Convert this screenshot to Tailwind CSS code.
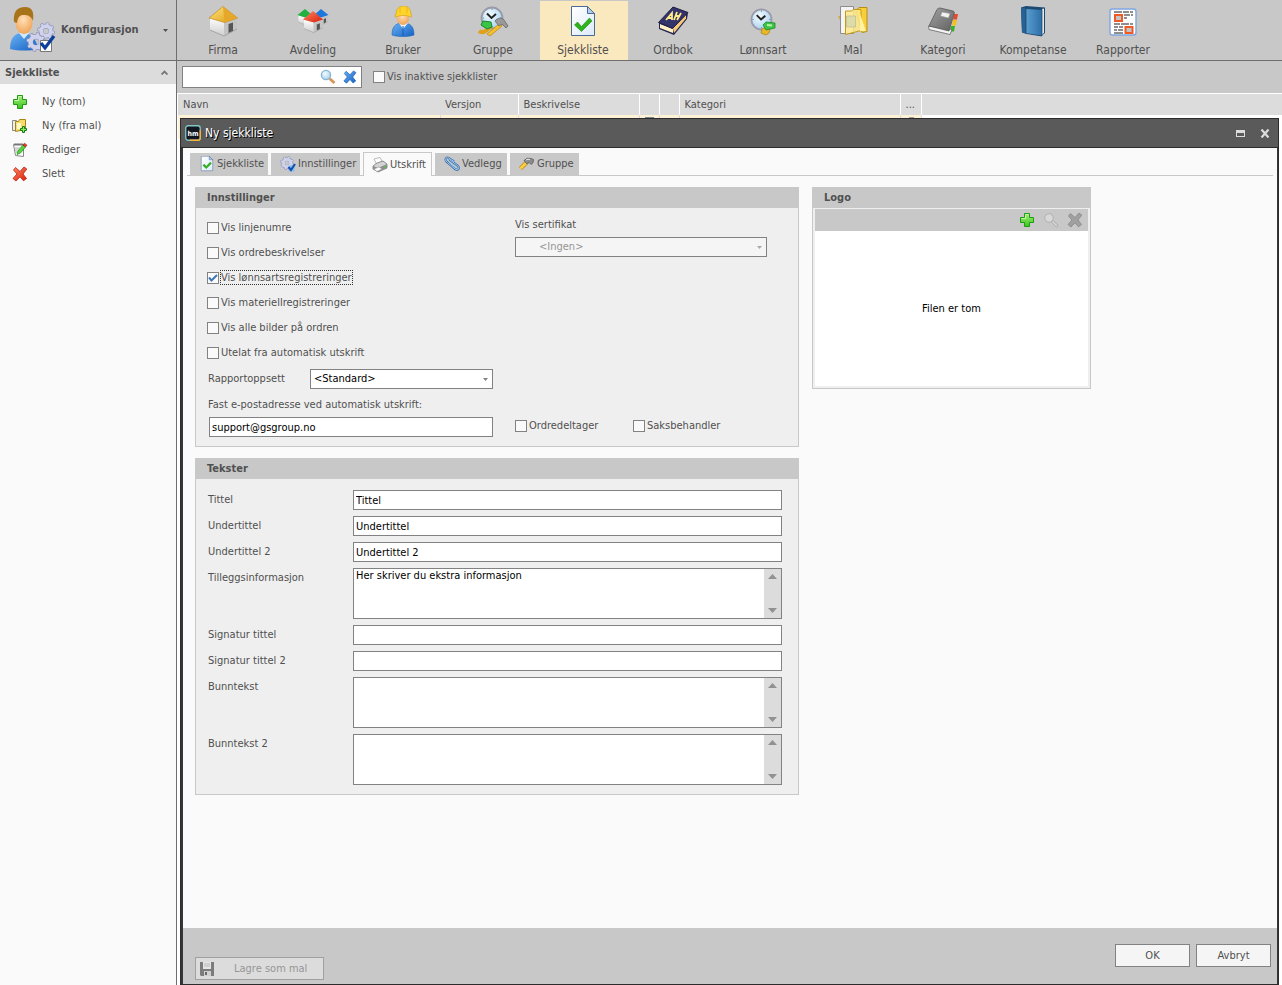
<!DOCTYPE html>
<html lang="no">
<head>
    <meta charset="UTF-8">
    <meta name="viewport" content="width=device-width, initial-scale=1.0">
    <title>Konfigurasjon - Sjekkliste</title>
    <script src="https://cdn.jsdelivr.net/npm/@tailwindcss/browser@4"></script>
</head>
<body class="flex h-screen overflow-hidden bg-[#fafafa] font-['DejaVu_Sans_Condensed','DejaVu_Sans',sans-serif] text-[11px] leading-4 text-[#505050]">

    <!-- Shared gradients and symbols -->
    <svg class="absolute size-0" aria-hidden="true">
        <defs>
            <linearGradient id="gold" x1="0" y1="0" x2="1" y2="1"><stop offset="0" stop-color="#ffe680"/><stop offset="1" stop-color="#dd9a10"/></linearGradient>
            <linearGradient id="wall" x1="0" y1="0" x2="0" y2="1"><stop offset="0" stop-color="#fff"/><stop offset="1" stop-color="#cfcfcf"/></linearGradient>
            <linearGradient id="blue" x1="0" y1="0" x2="1" y2="1"><stop offset="0" stop-color="#6ab4f5"/><stop offset="1" stop-color="#155fc4"/></linearGradient>
            <linearGradient id="green" x1="0" y1="0" x2="0" y2="1"><stop offset="0" stop-color="#a4f07c"/><stop offset="1" stop-color="#3cc41a"/></linearGradient>
            <linearGradient id="red" x1="0" y1="0" x2="1" y2="1"><stop offset="0" stop-color="#ff8a66"/><stop offset="1" stop-color="#d81c08"/></linearGradient>
            <linearGradient id="steel" x1="0" y1="0" x2="1" y2="1"><stop offset="0" stop-color="#a2a2a2"/><stop offset="1" stop-color="#606060"/></linearGradient>
            <linearGradient id="cover" x1="0" y1="0" x2="1" y2="0"><stop offset="0" stop-color="#5a9fd0"/><stop offset="1" stop-color="#2c6ea6"/></linearGradient>
            <linearGradient id="paper" x1="0" y1="0" x2="1" y2="1"><stop offset="0" stop-color="#fff"/><stop offset="1" stop-color="#dceafa"/></linearGradient>
            <radialGradient id="skin" cx=".45" cy=".35" r=".7"><stop offset="0" stop-color="#ffe0b8"/><stop offset="1" stop-color="#f0a050"/></radialGradient>
            <radialGradient id="glass" cx=".4" cy=".35" r=".7"><stop offset="0" stop-color="#f4fcff"/><stop offset="1" stop-color="#a4d0ee"/></radialGradient>
        </defs>
        <symbol id="house" viewBox="0 0 32 32">
            <path d="M3 11 17 15v15L3 24z" fill="url(#wall)"/>
            <path d="M17 15 30 11v12L17 30z" fill="#c4c4c4"/>
            <path d="M21.500 18 26 16.500v8.500l-4.500 2z" fill="#555"/>
            <path d="M3 24 17 30 30 23" fill="none" stroke="#999" stroke-width=".8"/>
        </symbol>
        <symbol id="clock" viewBox="0 0 24 24">
            <circle cx="12" cy="12" r="10.500" fill="url(#glass)" stroke="#9a9aa8" stroke-width="1.800"/>
            <path d="M7 7.500 11.500 12 16 8" fill="none" stroke="#222" stroke-width="2"/>
            <path d="M12 2.500v1.500M12 20v1.500M2.500 12H4M20 12h1.500" stroke="#678" stroke-width=".8"/>
        </symbol>
        <symbol id="plus" viewBox="0 0 16 16">
            <path d="M5.500 1.500h5v4h4v5h-4v4h-5v-4h-4v-5h4z" fill="url(#green)" stroke="#1f9a14"/>
            <path d="M6.500 2.500h3M2.500 6.500h4v-3" fill="none" stroke="#cbf9b0"/>
        </symbol>
        <symbol id="cross" viewBox="0 0 16 16">
            <path d="M3.500 1.500 8 5.500 12 1 14.800 3 11 8l3.500 4.500-3 2.300L8 10.800 4 15 1 12.500 5 8 1.500 4z"/>
        </symbol>
        <symbol id="gear" viewBox="0 0 20 20">
            <circle cx="10" cy="10" r="8" fill="none" stroke="#8a8fb8" stroke-width="3.600" stroke-dasharray="3.140 3.140"/>
            <circle cx="10" cy="10" r="5.600" fill="none" stroke="#8a8fb8" stroke-width="5.500"/>
            <circle cx="10" cy="10" r="8" fill="none" stroke="#d3d6ec" stroke-width="2.200" stroke-dasharray="2.300 3.980" stroke-dashoffset="-.4"/>
            <circle cx="10" cy="10" r="5.400" fill="none" stroke="#cfd2ea" stroke-width="4.400"/>
        </symbol>
        <symbol id="checkpage" viewBox="0 0 32 32">
            <path d="M4.500 .5h16l7 7v22h-23z" fill="url(#paper)" stroke="#4a6a98"/>
            <path d="M20.500 .5v7h7z" fill="#b4cdea" stroke="#4a6a98"/>
            <path d="M7.500 19 10.500 16l4 4.500L22.500 12l2.500 3-10.500 10.500z" fill="#2fb31c" stroke="#1d8a10" stroke-width=".6"/>
        </symbol>
        <symbol id="folder" viewBox="0 0 32 32">
            <path d="M1 10l5 1v5H4z" fill="#d9a520"/>
            <path d="M3.500 .5h13v27h-13z" fill="#f4f4f4" stroke="#8d8d8d"/>
            <path d="M19 4.500l3-3h8v24l-5 1z" fill="#f6cf3a" stroke="#b98d12"/>
            <path d="M8.500 5h6l2-1.500H24v21L8.500 28.500z" fill="#ffe98a" fill-opacity=".85" stroke="#c59a16"/>
            <path d="M9.500 10h9v11h-9z" fill="#dcdca8" stroke="#b4b48a" stroke-width=".6"/>
            <path d="M23 25V8l6 17z" fill="#fff2a0"/>
        </symbol>
    </svg>

    <!-- Sidebar -->
    <aside class="flex w-[177px] shrink-0 flex-col border-r border-[#6e6e6e]">
        <button class="flex h-[61px] items-center border-b border-[#6e6e6e] bg-[#c8c8c8] pr-2 pl-2 text-left font-bold">
            <svg class="size-12 shrink-0" viewBox="0 0 48 48" aria-hidden="true">
                <path d="M2 43c0-10 4-16 12-16s14 4 16 16c-9 2-19 2-28 0z" fill="url(#blue)"/>
                <path d="M11 27l5 6 5-6z" fill="#d5e8fa"/>
                <ellipse cx="16" cy="17" rx="8.500" ry="11" fill="url(#skin)"/>
                <path d="M6 16C5 6 9 1 17 1s9 6 8 14c-2-5-5-6-9-6s-6 1-7 8z" fill="#a8741a"/>
                <use href="#gear" x="29" y="16" width="18" height="18"/>
                <use href="#gear" x="18" y="26" width="20" height="20"/>
                <path d="M32.500 34.500h11v11h-11z" fill="#fff" stroke="#777"/>
                <path d="M33 37l4 5 9-12" fill="none" stroke="#0c3f9c" stroke-width="3.200"/>
            </svg>
            <span class="ml-[5px] flex-1">Konfigurasjon</span>
            <svg class="h-[3px] w-[5px]" viewBox="0 0 5 3" aria-hidden="true"><path d="M0 0h5L2.500 3z" fill="#505050"/></svg>
        </button>
        <button class="flex h-[23px] items-center justify-between bg-[#dcdcdc] pr-2 pl-[5px] font-bold">
            Sjekkliste
            <svg class="h-[5px] w-[7px]" viewBox="0 0 7 5" aria-hidden="true"><path d="M.5 4.500l3-3 3 3" fill="none" stroke="#777" stroke-width="1.800"/></svg>
        </button>
        <nav class="flex flex-col pt-[6px]">
            <a href="#" class="flex h-6 items-center gap-[14px] pl-3">
                <svg class="size-4" aria-hidden="true"><use href="#plus"/></svg>Ny (tom)
            </a>
            <a href="#" class="flex h-6 items-center gap-[14px] pl-3">
                <svg class="size-4" viewBox="0 0 16 16" aria-hidden="true">
                    <path d="M.5 2.500h4v10h-4z" fill="#eee" stroke="#888"/>
                    <path d="M3.500 3.500h3l1-2h6v10l-10 2z" fill="#f8dc6a" stroke="#a88418"/>
                    <path d="M5 5h4v6H5z" fill="#fff8d0"/>
                    <path d="M10.500 8.500h2v2h2v2h-2v2h-2v-2h-2v-2h2z" fill="#8af060" stroke="#157a10"/>
                </svg>Ny (fra mal)
            </a>
            <a href="#" class="flex h-6 items-center gap-[14px] pl-3">
                <svg class="size-4" viewBox="0 0 16 16" aria-hidden="true">
                    <path d="M1.500 2.500h10v12l-8-1z" fill="#fff" stroke="#888"/>
                    <path d="M2 2.500h9" stroke="#777" stroke-width="2"/>
                    <path d="M3 6h5M3 8h4M3.500 10h3" stroke="#aaa"/>
                    <path d="M5 12.500 6 9l5-6 2.500 2-5 6z" fill="#56d838" stroke="#1d8a14" stroke-width=".7"/>
                    <path d="M11 3l1.500-1.800 2.500 2L13.500 5z" fill="#e83a2a" stroke="#a01c10" stroke-width=".6"/>
                </svg>Rediger
            </a>
            <a href="#" class="flex h-6 items-center gap-[14px] pl-3">
                <svg class="size-4" fill="url(#red)" stroke="#c02010" stroke-width=".8" aria-hidden="true"><use href="#cross"/></svg>Slett
            </a>
        </nav>
    </aside>

    <main class="flex min-w-0 flex-1 flex-col">
        <!-- Module toolbar -->
        <nav class="flex h-[61px] shrink-0 gap-[2px] border-b border-[#6e6e6e] bg-[#c8c8c8] pt-px pl-[3px] text-[12px]">
            <a href="#" class="flex w-[88px] flex-col items-center pt-[5px] pr-[2px]">
                <svg class="size-8" viewBox="0 0 32 32" aria-hidden="true">
                    <use href="#house"/>
                    <path d="M16 .5 30.500 12 17.500 16.500 2 12z" fill="url(#gold)" stroke="#b87c10" stroke-width=".6"/>
                    <path d="M16 .5 30.500 12 17.500 16.500z" fill="#e6a82a"/>
                </svg>
                <span class="mt-1">Firma</span>
            </a>
            <a href="#" class="flex w-[88px] flex-col items-center pt-[5px] pr-[2px]">
                <svg class="size-8" viewBox="0 0 32 32" aria-hidden="true">
                    <use href="#house" x="0" y="4" width="16" height="16"/>
                    <path d="M8 3l7 6-7 2.500L.5 9z" fill="#22b040"/>
                    <use href="#house" x="16" y="4" width="16" height="16"/>
                    <path d="M24 3l7.500 6-7.500 2.500L17 9z" fill="#1e78dc"/>
                    <use href="#house" x="5" y="6" width="22" height="22"/>
                    <path d="M16 5 26 13.500 17 16.500 6 13.500z" fill="url(#red)"/>
                </svg>
                <span class="mt-1">Avdeling</span>
            </a>
            <a href="#" class="flex w-[88px] flex-col items-center pt-[5px] pr-[2px]">
                <svg class="size-8" viewBox="0 0 32 32" aria-hidden="true">
                    <path d="M5 29c0-8 3-12 11-12s11 4 11 12c-6 2-16 2-22 0z" fill="url(#blue)" stroke="#1e66b8" stroke-width=".6"/>
                    <path d="M12 17l4 6 5-6z" fill="#eef6ff"/>
                    <path d="M16 20v10" stroke="#1b5cb0"/>
                    <ellipse cx="16" cy="12" rx="6" ry="7" fill="url(#skin)"/>
                    <path d="M9 9c0-6 3-9 7.500-9S24 3 24 9c1 0 1 2 0 2-4-2-11-2-15 0-1.500 0-1.500-2 0-2z" fill="#ffd428" stroke="#d09a10" stroke-width=".6"/>
                    <path d="M13 1v6M20 1v6" stroke="#e8b820"/>
                </svg>
                <span class="mt-1">Bruker</span>
            </a>
            <a href="#" class="flex w-[88px] flex-col items-center pt-[5px] pr-[2px]">
                <svg class="size-8" viewBox="0 0 32 32" aria-hidden="true">
                    <use href="#clock" x="3" y="0" width="24" height="24"/>
                    <path d="M2 25c4 3 8 0 12-5" fill="none" stroke="#e0a018" stroke-width="4"/>
                    <path d="M4 19l2-4 8 1 1 5-5 2z" fill="#3cc44a" stroke="#178a24"/>
                    <path d="M10 28 23 17l2 3-12 10z" fill="#f4c030" stroke="#b88410" stroke-width=".7"/>
                    <path d="M18 15c2-3 7-4 9-1l4 6-2 2-4-4-3 2z" fill="#9a9a9a" stroke="#666" stroke-width=".8"/>
                </svg>
                <span class="mt-1">Gruppe</span>
            </a>
            <a href="#" aria-current="page" class="flex w-[88px] flex-col items-center bg-[#fae8be] pt-[5px] pr-[2px]">
                <svg class="size-8" aria-hidden="true"><use href="#checkpage"/></svg>
                <span class="mt-1">Sjekkliste</span>
            </a>
            <a href="#" class="flex w-[88px] flex-col items-center pt-[5px] pr-[2px]">
                <svg class="size-8" viewBox="0 0 32 32" aria-hidden="true">
                    <path d="M2 16v7l15 6 13-16 1-6z" fill="#24244e"/>
                    <path d="M3 18l13 5v4L3 22z" fill="#fff0c8"/>
                    <path d="M16 22 29 8.500v4L17 27z" fill="#f5c878"/>
                    <path d="M16 1 31 6.500 15.500 22.500 1.500 16.500z" fill="#34346a" stroke="#1d1d45"/>
                    <path d="M9 14l6-7v7M11 12h4M20 6l-3 8M24 7l-4 7M18.500 10h4" fill="none" stroke="#ffec88" stroke-width="1.800"/>
                </svg>
                <span class="mt-1">Ordbok</span>
            </a>
            <a href="#" class="flex w-[88px] flex-col items-center pt-[5px] pr-[2px]">
                <svg class="size-8" viewBox="0 0 32 32" aria-hidden="true">
                    <use href="#clock" x="3" y="2" width="23" height="23"/>
                    <path d="M15 23l4-2 4 2-1 4-3 2-5-2z" fill="#e8b828" stroke="#a87c10" stroke-width=".7"/>
                    <path d="M16 19l3-3 9 1v5l-9 2z" fill="#3cc44a" stroke="#178a24" stroke-width=".8"/>
                    <path d="M20 19l5 .5" stroke="#b8f4a0" stroke-width="2"/>
                </svg>
                <span class="mt-1">Lønnsart</span>
            </a>
            <a href="#" class="flex w-[88px] flex-col items-center pt-[5px] pr-[2px]">
                <svg class="size-8" aria-hidden="true"><use href="#folder"/></svg>
                <span class="mt-1">Mal</span>
            </a>
            <a href="#" class="flex w-[88px] flex-col items-center pt-[5px] pr-[2px]">
                <svg class="size-8" viewBox="0 0 32 32" aria-hidden="true">
                    <path d="M27 8h4l-1 5.500h-4z" fill="#e8482c"/>
                    <path d="M26 14h4l-1 5.500h-4z" fill="#f4c020"/>
                    <path d="M24 20h4l-1 5.500h-4z" fill="#34b424"/>
                    <path d="M1.500 20 2 23.500 23 28.500l2-5z" fill="#f4f4f4" stroke="#666" stroke-width=".8"/>
                    <path d="M10 3.500Q11 2 13 2l13 3q2 .5 1 3l-5 17-20-5z" fill="url(#steel)" stroke="#585858" stroke-width=".8"/>
                    <path d="M15 6l8 1.500-1.500 4.500L13.500 10z" fill="#f2f2f2" stroke="#999" stroke-width=".6"/>
                </svg>
                <span class="mt-1">Kategori</span>
            </a>
            <a href="#" class="flex w-[88px] flex-col items-center pt-[5px] pr-[2px]">
                <svg class="size-8" viewBox="0 0 32 32" aria-hidden="true">
                    <path d="M4 1.500l5-1.500 19 1.500V27l-4 3L5 26.500z" fill="#1c4a74"/>
                    <path d="M25 3l2-.5v24L25 29z" fill="#e8e8e8"/>
                    <path d="M4 1.500l5 1v25.500L5 26.500z" fill="#286294"/>
                    <path d="M9 2.500l16 1V30L9 27.500z" fill="url(#cover)" stroke="#173f66" stroke-width=".7"/>
                </svg>
                <span class="mt-1">Kompetanse</span>
            </a>
            <a href="#" class="flex w-[88px] flex-col items-center pt-[5px] pr-[2px]">
                <svg class="size-8" viewBox="0 0 32 32" aria-hidden="true">
                    <rect x="3" y="3" width="26" height="26" rx="2.500" fill="#fff" stroke="#7fa6e0" stroke-width="1.400"/>
                    <path d="M7 6h8M16 6h6M23 6h3M17 9h6M24 9h2M17 12h3M7 18h6M14 18h8M23 18h3M7 21h4M12 21h4M7 24h3M11 24h5M7 27h9" stroke="#8e8e8e" stroke-width="1.800"/>
                    <path d="M8 9h7v6H8zM18.500 21h7v6h-7z" fill="#c4c4c4" stroke="#f05a24" stroke-width="2"/>
                </svg>
                <span class="mt-1">Rapporter</span>
            </a>
        </nav>

        <!-- Search row -->
        <div class="flex h-8 shrink-0 items-center bg-[#c8c8c8] pl-[5px]">
            <div class="flex h-[22px] w-[180px] items-center border border-[#828282] bg-white pr-1">
                <input type="text" aria-label="Søk" class="min-w-0 flex-1 px-1 outline-none">
                <button aria-label="Søk" class="mr-[7px]">
                    <svg class="size-4" viewBox="0 0 16 16" aria-hidden="true">
                        <path d="M9.500 9.500l5 4.500" stroke="#d89858" stroke-width="3"/>
                        <circle cx="6" cy="6" r="4.600" fill="url(#glass)" stroke="#8ab4d0" stroke-width="1.300"/>
                    </svg>
                </button>
                <button aria-label="Nullstill">
                    <svg class="size-[14px]" viewBox="0 0 14 14" fill="url(#blue)" stroke="#1c62b0" stroke-width=".8" aria-hidden="true"><use href="#cross" width="14" height="14"/></svg>
                </button>
            </div>
            <label class="ml-[11px] flex items-center gap-[2px]">
                <input type="checkbox" class="size-3 appearance-none border border-[#828282] bg-[#fafafa]">
                Vis inaktive sjekklister
            </label>
        </div>

        <!-- List with the editor window on top -->
        <section class="relative flex-1 border-t border-l border-white bg-white">
            <table class="w-full table-fixed border-collapse text-left">
                <colgroup>
                    <col class="w-[262px]"><col class="w-[78px]"><col class="w-[121px]"><col class="w-5"><col class="w-5"><col class="w-[221px]"><col class="w-[21px]"><col>
                </colgroup>
                <thead class="bg-[#dcdcdc]">
                    <tr class="h-[21px]">
                        <th class="pl-[5px] font-normal">Navn</th>
                        <th class="border-r border-white pl-[5px] font-normal">Versjon</th>
                        <th class="border-r border-white pl-[5px] font-normal">Beskrivelse</th>
                        <th class="border-r border-white"></th>
                        <th class="border-r border-white"></th>
                        <th class="border-r border-white pl-[5px] font-normal">Kategori</th>
                        <th class="border-r border-white pl-[5px] font-normal">...</th>
                        <th></th>
                    </tr>
                </thead>
                <tbody>
                    <tr class="h-6">
                        <td class="border-r border-[#dcdcdc] bg-[#fdf2d6]"></td>
                        <td class="border-r border-[#dcdcdc] bg-[#fdf2d6]"></td>
                        <td class="border-r border-[#dcdcdc] bg-[#fdf2d6]"></td>
                        <td class="border-r border-[#dcdcdc] bg-[#fdf2d6] pt-[2px] pl-[5px] align-top"><div class="h-4 w-[9px] bg-[#7c8490]"></div></td>
                        <td class="border-r border-[#dcdcdc] bg-[#fdf2d6]"></td>
                        <td class="border-r border-[#dcdcdc] bg-[#fdf2d6]"></td>
                        <td class="border-r border-[#dcdcdc] bg-[#fdf2d6] pt-[2px] pl-2 align-top"><div class="h-4 w-[5px] bg-[#a0a0a0]"></div></td>
                        <td></td>
                    </tr>
                </tbody>
            </table>

            <div role="dialog" aria-labelledby="dialog-title" class="absolute top-6 right-[3px] bottom-0 left-[2px] flex flex-col border border-[#2b2b2b] bg-[#33373b]">
                <header class="flex h-[29px] shrink-0 items-center border-b border-[#2b2b2b] bg-[#5a5a5a] pr-2 pl-1 text-white">
                    <svg class="size-4" viewBox="0 0 16 16" aria-hidden="true">
                        <rect x=".75" y=".75" width="14.500" height="14.500" rx="2.500" fill="#14161f" stroke="#7fc8c4" stroke-width="1.300"/>
                        <path d="M15.250 5v8q0 2.250-2.250 2.250H5" fill="none" stroke="#f4b23c" stroke-width="1.300"/>
                        <text x="8" y="10.500" text-anchor="middle" font-size="7" font-weight="bold" fill="#fff">hm</text>
                    </svg>
                    <h1 id="dialog-title" class="ml-1 flex-1 text-[12px] [text-shadow:1px_1px_0_#000]">Ny sjekkliste</h1>
                    <button aria-label="Maksimer" class="mr-[15px] h-[7px] w-[9px] border border-t-3 border-[#dcdcdc]"></button>
                    <button aria-label="Lukk">
                        <svg class="h-[9px] w-[10px]" viewBox="0 0 10 9" aria-hidden="true"><path d="M1.500.5l7 8M8.500.5l-7 8" stroke="#dcdcdc" stroke-width="2.200"/></svg>
                    </button>
                </header>

                <div class="mr-px ml-[2px] flex min-h-0 flex-1 flex-col bg-[#fafafa]">
                    <!-- Tabs -->
                    <div role="tablist" class="mx-1 flex h-7 shrink-0 items-end gap-[3px] border-b border-[#c8c8c8] pl-[3px]">
                        <button role="tab" class="flex h-[22px] w-[78px] items-center gap-[2px] bg-[#c8c8c8] pl-[9px]">
                            <svg class="size-4 shrink-0" aria-hidden="true"><use href="#checkpage"/></svg>Sjekkliste
                        </button>
                        <button role="tab" class="flex h-[22px] w-[89px] items-center gap-[2px] bg-[#c8c8c8] pl-[9px]">
                            <svg class="size-4 shrink-0" viewBox="0 0 16 16" aria-hidden="true">
                                <use href="#gear" width="14" height="14"/>
                                <path d="M8.500 9.500h6v6h-6z" fill="#8fc0ee"/>
                                <path d="M8.500 11l2.500 3 4-6" fill="none" stroke="#1450b0" stroke-width="2.200"/>
                            </svg>Innstillinger
                        </button>
                        <button role="tab" aria-selected="true" class="-mb-px flex h-6 w-[69px] items-center gap-[2px] border border-b-0 border-[#c8c8c8] bg-[#fafafa] pl-2">
                            <svg class="size-4 shrink-0" viewBox="0 0 16 16" aria-hidden="true">
                                <path d="M2 2l6-1.500L11 6 5 8z" fill="#fff" stroke="#aaa" stroke-width=".8"/>
                                <path d="M1 9l4-3 6-2 4 3v4l-9 4-5-3z" fill="#d4d4d4" stroke="#777" stroke-width=".8"/>
                                <path d="M1 9l5 2 9-4v4l-9 4-5-3z" fill="#8e8e8e"/>
                                <path d="M2 12l5-2 3 2-5 2.500z" fill="#fff" stroke="#999" stroke-width=".6"/>
                                <path d="M12 9h1.500v1.500H12z" fill="#4cd030"/>
                            </svg>Utskrift
                        </button>
                        <button role="tab" class="flex h-[22px] w-[72px] items-center gap-[2px] bg-[#c8c8c8] pl-[9px]">
                            <svg class="size-4 shrink-0" viewBox="0 0 16 16" fill="none" aria-hidden="true">
                                <path d="M10 5.500 4.500 2Q2 1 1.500 3.500q0 1.500 2 3l7.500 6.500q2.500 1.500 3.500 0t-1-3.500L5.500 3.500" stroke="#3a6fa8" stroke-width="2.200"/>
                                <path d="M10 5.500 4.500 2Q2 1 1.500 3.500q0 1.500 2 3l7.500 6.500q2.500 1.500 3.500 0t-1-3.500L5.500 3.500M5 6l7 6" stroke="#9cc8f0"/>
                            </svg>Vedlegg
                        </button>
                        <button role="tab" class="flex h-[22px] w-[69px] items-center gap-[2px] bg-[#c8c8c8] pl-[9px]">
                            <svg class="size-4 shrink-0" viewBox="0 0 16 16" aria-hidden="true">
                                <path d="M1.500 12.500 8 6" stroke="#b88410" stroke-width="4"/>
                                <path d="M1.500 12.500 8 6" stroke="#ffd040" stroke-width="2.600"/>
                                <path d="M5 4.500Q8 1 12 2.500l2.500 1Q15 7 12 8.500L10 6.500 8 8 6 6z" fill="#8c8c8c" stroke="#555" stroke-width=".7"/>
                                <path d="M7 4q2-1.500 4-.5" stroke="#eee" fill="none"/>
                            </svg>Gruppe
                        </button>
                    </div>

                    <!-- Tab content -->
                    <div class="flex min-h-0 flex-1 items-start gap-[13px] pt-[11px] pl-3">
                        <div class="flex w-full max-w-[604px] flex-col gap-[11px]">
                            <section class="border border-[#c8c8c8] bg-[#efefef]">
                                <h2 class="h-5 bg-[#c8c8c8] pl-[11px] leading-5 font-bold">Innstillinger</h2>
                                <div class="flex justify-between pt-[7px] pr-[31px] pb-[9px] pl-[11px]">
                                    <div class="flex flex-col">
                                        <label class="flex h-[25px] items-center gap-[2px]"><input type="checkbox" class="size-3 appearance-none border border-[#828282] bg-[#fafafa]">Vis linjenumre</label>
                                        <label class="flex h-[25px] items-center gap-[2px]"><input type="checkbox" class="size-3 appearance-none border border-[#828282] bg-[#fafafa]">Vis ordrebeskrivelser</label>
                                        <label class="flex h-[25px] items-center gap-[2px]">
                                            <span class="relative flex">
                                                <input type="checkbox" checked class="size-3 appearance-none border border-[#828282] bg-[#fafafa]">
                                                <svg class="pointer-events-none absolute inset-0 size-3" viewBox="0 0 12 12" aria-hidden="true"><path d="M2 5.500 4.500 8.500 10 3" fill="none" stroke="#3c78b8" stroke-width="2"/></svg>
                                            </span>
                                            <span class="h-[13px] leading-[13px] outline-1 outline-dotted outline-[#333]">Vis lønnsartsregistreringer</span>
                                        </label>
                                        <label class="flex h-[25px] items-center gap-[2px]"><input type="checkbox" class="size-3 appearance-none border border-[#828282] bg-[#fafafa]">Vis materiellregistreringer</label>
                                        <label class="flex h-[25px] items-center gap-[2px]"><input type="checkbox" class="size-3 appearance-none border border-[#828282] bg-[#fafafa]">Vis alle bilder på ordren</label>
                                        <label class="flex h-[26px] items-center gap-[2px]"><input type="checkbox" class="size-3 appearance-none border border-[#828282] bg-[#fafafa]">Utelat fra automatisk utskrift</label>
                                        <div class="mt-[3px] flex items-center justify-between">
                                            <label for="layout" class="pl-px">Rapportoppsett</label>
                                            <div class="relative flex w-[183px]">
                                                <select id="layout" class="h-5 w-full appearance-none border border-[#828282] bg-white pl-[3px] text-black">
                                                    <option>&lt;Standard&gt;</option>
                                                </select>
                                                <svg class="pointer-events-none absolute top-[9px] right-[5px] h-[3px] w-[5px]" viewBox="0 0 5 3" aria-hidden="true"><path d="M0 0h5L2.500 3z" fill="#828282"/></svg>
                                            </div>
                                        </div>
                                        <label for="email" class="mt-2 pl-px">Fast e-postadresse ved automatisk utskrift:</label>
                                        <div class="mt-1 flex items-center">
                                            <input id="email" type="text" value="support@gsgroup.no" class="ml-[2px] h-5 w-[284px] border border-[#828282] bg-white px-[2px] text-black">
                                        </div>
                                    </div>
                                    <div class="flex w-[252px] flex-col justify-between">
                                        <div class="flex flex-col gap-1 pt-[2px]">
                                            <label for="cert">Vis sertifikat</label>
                                            <div class="relative flex">
                                                <select id="cert" disabled class="h-5 w-full appearance-none border border-[#828282] bg-[#f5f5f5] pl-[23px] text-[#969696] opacity-100">
                                                    <option>&lt;Ingen&gt;</option>
                                                </select>
                                                <svg class="pointer-events-none absolute top-[9px] right-[5px] h-[3px] w-[5px]" viewBox="0 0 5 3" aria-hidden="true"><path d="M0 0h5L2.500 3z" fill="#a8a8a8"/></svg>
                                            </div>
                                        </div>
                                        <div class="flex h-[22px] items-center">
                                            <label class="flex w-[118px] items-center gap-[2px]"><input type="checkbox" class="size-3 appearance-none border border-[#828282] bg-[#fafafa]">Ordredeltager</label>
                                            <label class="flex items-center gap-[2px]"><input type="checkbox" class="size-3 appearance-none border border-[#828282] bg-[#fafafa]">Saksbehandler</label>
                                        </div>
                                    </div>
                                </div>
                            </section>

                            <section class="border border-[#c8c8c8] bg-[#efefef]">
                                <h2 class="h-5 bg-[#c8c8c8] pl-[11px] leading-5 font-bold">Tekster</h2>
                                <div class="grid grid-cols-[145px_1fr] items-start gap-y-[6px] pt-[11px] pr-4 pb-[9px] pl-3">
                                    <label for="title" class="leading-5">Tittel</label>
                                    <input id="title" type="text" value="Tittel" class="h-5 border border-[#828282] bg-white px-[2px] text-black">
                                    <label for="subtitle" class="leading-5">Undertittel</label>
                                    <input id="subtitle" type="text" value="Undertittel" class="h-5 border border-[#828282] bg-white px-[2px] text-black">
                                    <label for="subtitle2" class="leading-5">Undertittel 2</label>
                                    <input id="subtitle2" type="text" value="Undertittel 2" class="h-5 border border-[#828282] bg-white px-[2px] text-black">
                                    <label for="extra" class="leading-5">Tilleggsinformasjon</label>
                                    <div class="flex h-[51px] border border-[#828282] bg-white">
                                        <textarea id="extra" class="flex-1 resize-none overflow-hidden px-[2px] leading-[14px] text-black">Her skriver du ekstra informasjon</textarea>
                                        <div class="flex w-[17px] flex-col items-center justify-between bg-[#dcdcdc] py-[5px]">
                                            <svg class="h-[5px] w-[9px]" viewBox="0 0 9 5" aria-hidden="true"><path d="M0 5h9L4.500 0z" fill="#919191"/></svg>
                                            <svg class="h-[5px] w-[9px]" viewBox="0 0 9 5" aria-hidden="true"><path d="M0 0h9L4.500 5z" fill="#919191"/></svg>
                                        </div>
                                    </div>
                                    <label for="sign" class="leading-5">Signatur tittel</label>
                                    <input id="sign" type="text" class="h-5 border border-[#828282] bg-white px-[2px] text-black">
                                    <label for="sign2" class="leading-5">Signatur tittel 2</label>
                                    <input id="sign2" type="text" class="h-5 border border-[#828282] bg-white px-[2px] text-black">
                                    <label for="footer" class="leading-5">Bunntekst</label>
                                    <div class="flex h-[51px] border border-[#828282] bg-white">
                                        <textarea id="footer" class="flex-1 resize-none overflow-hidden px-[2px] leading-[14px] text-black"></textarea>
                                        <div class="flex w-[17px] flex-col items-center justify-between bg-[#dcdcdc] py-[5px]">
                                            <svg class="h-[5px] w-[9px]" viewBox="0 0 9 5" aria-hidden="true"><path d="M0 5h9L4.500 0z" fill="#919191"/></svg>
                                            <svg class="h-[5px] w-[9px]" viewBox="0 0 9 5" aria-hidden="true"><path d="M0 0h9L4.500 5z" fill="#919191"/></svg>
                                        </div>
                                    </div>
                                    <label for="footer2" class="leading-5">Bunntekst 2</label>
                                    <div class="flex h-[51px] border border-[#828282] bg-white">
                                        <textarea id="footer2" class="flex-1 resize-none overflow-hidden px-[2px] leading-[14px] text-black"></textarea>
                                        <div class="flex w-[17px] flex-col items-center justify-between bg-[#dcdcdc] py-[5px]">
                                            <svg class="h-[5px] w-[9px]" viewBox="0 0 9 5" aria-hidden="true"><path d="M0 5h9L4.500 0z" fill="#919191"/></svg>
                                            <svg class="h-[5px] w-[9px]" viewBox="0 0 9 5" aria-hidden="true"><path d="M0 0h9L4.500 5z" fill="#919191"/></svg>
                                        </div>
                                    </div>
                                </div>
                            </section>
                        </div>

                        <section class="w-[279px] shrink-0 border border-[#c8c8c8] bg-[#efefef]">
                            <h2 class="h-5 bg-[#c8c8c8] pl-[11px] leading-5 font-bold">Logo</h2>
                            <div class="px-[2px] pt-px pb-[2px]">
                                <div class="flex h-[22px] items-center justify-end gap-2 bg-[#c8c8c8] pr-[5px]">
                                    <button aria-label="Legg til"><svg class="size-4" aria-hidden="true"><use href="#plus"/></svg></button>
                                    <button aria-label="Vis" disabled>
                                        <svg class="size-4" viewBox="0 0 16 16" aria-hidden="true">
                                            <path d="M9.500 9.500l5 5" stroke="#a8a8a8" stroke-width="3"/>
                                            <path d="M9.500 9.500l4.500 4.500" stroke="#dadada" stroke-width="1.500"/>
                                            <circle cx="6" cy="6" r="4.300" fill="#d8d8d8" stroke="#b0b0b0"/>
                                        </svg>
                                    </button>
                                    <button aria-label="Fjern" disabled><svg class="size-4" fill="#a0a0a0" stroke="#868686" stroke-width=".8" aria-hidden="true"><use href="#cross"/></svg></button>
                                </div>
                                <p class="flex h-[155px] items-center justify-center bg-white text-black">Filen er tom</p>
                            </div>
                        </section>
                    </div>

                    <!-- Dialog buttons -->
                    <footer class="flex h-14 shrink-0 items-start gap-[6px] bg-[#c8c8c8] pr-[6px] pl-3">
                        <button disabled class="mr-auto mb-1 flex h-[23px] w-[129px] items-center self-end border border-[#a0a0a0] bg-[#dcdcdc] pl-1 text-[#969696]">
                            <svg class="size-[14px]" viewBox="0 0 14 14" aria-hidden="true">
                                <path d="M0 0h14v14H1l-1-1z" fill="#7c7c7c"/>
                                <path d="M3 0h8v7H3z" fill="#e6e6e6"/>
                                <path d="M4 2h6M4 4h6" stroke="#b8b8b8"/>
                                <path d="M4 9h7v5H4z" fill="#d0d0d0"/>
                                <path d="M5 10h2v3H5z" fill="#6a6a6a"/>
                            </svg>
                            <span class="ml-5">Lagre som mal</span>
                        </button>
                        <button class="mt-4 h-[23px] w-[75px] border border-[#828282] bg-[#f5f5f5]">OK</button>
                        <button class="mt-4 h-[23px] w-[75px] border border-[#828282] bg-[#f5f5f5]">Avbryt</button>
                    </footer>
                </div>
            </div>
        </section>
    </main>
</body>
</html>
